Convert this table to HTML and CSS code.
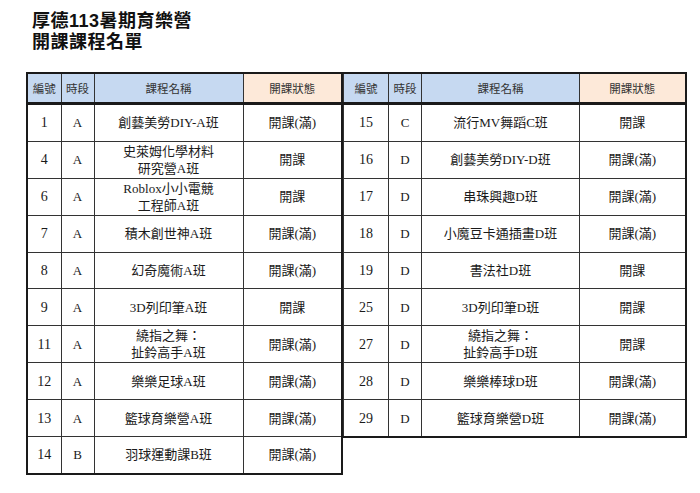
FILE: index.html
```html
<!DOCTYPE html>
<html lang="zh-Hant">
<head>
<meta charset="utf-8">
<title>厚德113暑期育樂營 開課課程名單</title>
<link rel="stylesheet" href="styles.css">
</head>
<body>
<div class="page">
  <h1 class="title"><span class="line">厚德113暑期育樂營</span><span class="line">開課課程名單</span></h1>
  <div class="tables">
    <table class="course left">
      <colgroup><col class="c-no"><col class="c-slot"><col class="c-name"><col class="c-status"></colgroup>
      <thead>
        <tr><th>編號</th><th>時段</th><th>課程名稱</th><th class="st">開課狀態</th></tr>
      </thead>
      <tbody>
        <tr><td>1</td><td>A</td><td>創藝美勞DIY-A班</td><td>開課(滿)</td></tr>
        <tr><td>4</td><td>A</td><td class="two">史萊姆化學材料<br>研究營A班</td><td>開課</td></tr>
        <tr><td>6</td><td>A</td><td class="two">Roblox小小電競<br>工程師A班</td><td>開課</td></tr>
        <tr><td>7</td><td>A</td><td>積木創世神A班</td><td>開課(滿)</td></tr>
        <tr><td>8</td><td>A</td><td>幻奇魔術A班</td><td>開課(滿)</td></tr>
        <tr><td>9</td><td>A</td><td>3D列印筆A班</td><td>開課</td></tr>
        <tr><td>11</td><td>A</td><td class="two">繞指之舞：<br>扯鈴高手A班</td><td>開課(滿)</td></tr>
        <tr><td>12</td><td>A</td><td>樂樂足球A班</td><td>開課(滿)</td></tr>
        <tr><td>13</td><td>A</td><td>籃球育樂營A班</td><td>開課(滿)</td></tr>
        <tr><td>14</td><td>B</td><td>羽球運動課B班</td><td>開課(滿)</td></tr>
      </tbody>
    </table>
    <table class="course right">
      <colgroup><col class="c-no2"><col class="c-slot"><col class="c-name2"><col class="c-status2"></colgroup>
      <thead>
        <tr><th>編號</th><th>時段</th><th>課程名稱</th><th class="st">開課狀態</th></tr>
      </thead>
      <tbody>
        <tr><td>15</td><td>C</td><td>流行MV舞蹈C班</td><td>開課</td></tr>
        <tr><td>16</td><td>D</td><td>創藝美勞DIY-D班</td><td>開課(滿)</td></tr>
        <tr><td>17</td><td>D</td><td>串珠興趣D班</td><td>開課(滿)</td></tr>
        <tr><td>18</td><td>D</td><td>小魔豆卡通插畫D班</td><td>開課(滿)</td></tr>
        <tr><td>19</td><td>D</td><td>書法社D班</td><td>開課</td></tr>
        <tr><td>25</td><td>D</td><td>3D列印筆D班</td><td>開課</td></tr>
        <tr><td>27</td><td>D</td><td class="two">繞指之舞：<br>扯鈴高手D班</td><td>開課</td></tr>
        <tr><td>28</td><td>D</td><td>樂樂棒球D班</td><td>開課(滿)</td></tr>
        <tr><td>29</td><td>D</td><td>籃球育樂營D班</td><td>開課(滿)</td></tr>
      </tbody>
    </table>
  </div>
</div>
</body>
</html>
```

FILE: styles.css
```css
html, body {
  margin: 0;
  padding: 0;
  background: #ffffff;
}

.page {
  padding: 11px 0 0 26px;
  font-family: "Liberation Serif", "Noto Sans CJK TC", serif;
  color: #1a1a1a;
}

.title {
  margin: 0 0 19px 6px;
  font-family: "Liberation Sans", "Noto Sans CJK TC", sans-serif;
  font-weight: 700;
  font-size: 18px;
  line-height: 21px;
  letter-spacing: 0.5px;
  color: #111;
}

.title .line {
  display: block;
}

.tables {
  display: flex;
  align-items: flex-start;
}

.course {
  border-collapse: collapse;
  table-layout: fixed;
  border: 2px solid #1a1a1a;
}

.course.right {
  border-left: none;
}

.c-no { width: 34px; }
.c-slot { width: 33px; }
.c-name { width: 149px; }
.c-status { width: 99px; }
.c-no2 { width: 45px; }
.c-name2 { width: 158px; }
.c-status2 { width: 106px; }

.course th,
.course td {
  border: 1px solid #333;
  text-align: center;
  vertical-align: middle;
  padding: 0;
}

.course th {
  height: 28px;
  background: #c6d9f1;
  font-family: "Noto Sans CJK TC", sans-serif;
  font-weight: 400;
  font-size: 11.5px;
  color: #333;
  border-bottom: 3px solid #1a1a1a;
}

.course th.st {
  background: #fde9d9;
}

.course td {
  height: 35.9px;
  font-size: 13px;
  line-height: 17px;
  color: #1a1a1a;
}

.course td:first-child {
  font-size: 14px;
}
```
